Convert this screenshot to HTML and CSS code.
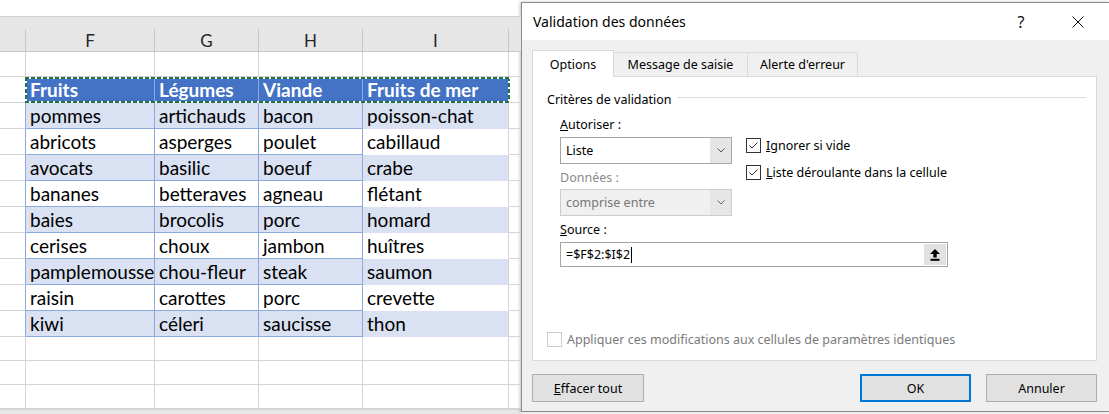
FILE: index.html
```html
<!DOCTYPE html>
<html lang="fr">
<head>
<meta charset="utf-8">
<title>Validation des données</title>
<link rel="stylesheet" href="styles.css">
</head>
<body>
<div class="screen">
  <div class="sheet">
    <div class="toprow"></div>
    <div class="row colhead">
      <div class="c rh"></div><div class="c cf">F</div><div class="c cg">G</div><div class="c ch">H</div><div class="c ci">I</div><div class="c cj"></div>
    </div>
    <div class="row r1">
      <div class="c rh"></div><div class="c cf"></div><div class="c cg"></div><div class="c ch"></div><div class="c ci"></div><div class="c cj"></div>
    </div>
    <div class="row thead">
      <div class="c rh tb"></div><div class="c cf t">Fruits</div><div class="c cg t">Légumes</div><div class="c ch t">Viande</div><div class="c ci t">Fruits de mer</div><div class="c cj"></div>
      <div class="ants"></div>
    </div>
    <div class="row d band"><div class="c rh tb"></div><div class="c cf t">pommes</div><div class="c cg t">artichauds</div><div class="c ch t">bacon</div><div class="c ci t">poisson-chat</div><div class="c cj"></div></div>
    <div class="row d"><div class="c rh tb"></div><div class="c cf t">abricots</div><div class="c cg t">asperges</div><div class="c ch t">poulet</div><div class="c ci t">cabillaud</div><div class="c cj"></div></div>
    <div class="row d band"><div class="c rh tb"></div><div class="c cf t">avocats</div><div class="c cg t">basilic</div><div class="c ch t">boeuf</div><div class="c ci t">crabe</div><div class="c cj"></div></div>
    <div class="row d"><div class="c rh tb"></div><div class="c cf t">bananes</div><div class="c cg t">betteraves</div><div class="c ch t">agneau</div><div class="c ci t">flétant</div><div class="c cj"></div></div>
    <div class="row d band"><div class="c rh tb"></div><div class="c cf t">baies</div><div class="c cg t">brocolis</div><div class="c ch t">porc</div><div class="c ci t">homard</div><div class="c cj"></div></div>
    <div class="row d"><div class="c rh tb"></div><div class="c cf t">cerises</div><div class="c cg t">choux</div><div class="c ch t">jambon</div><div class="c ci t">huîtres</div><div class="c cj"></div></div>
    <div class="row d band"><div class="c rh tb"></div><div class="c cf t">pamplemousse</div><div class="c cg t">chou-fleur</div><div class="c ch t">steak</div><div class="c ci t">saumon</div><div class="c cj"></div></div>
    <div class="row d"><div class="c rh tb"></div><div class="c cf t">raisin</div><div class="c cg t">carottes</div><div class="c ch t">porc</div><div class="c ci t">crevette</div><div class="c cj"></div></div>
    <div class="row d band"><div class="c rh tb"></div><div class="c cf t">kiwi</div><div class="c cg t">céleri</div><div class="c ch t">saucisse</div><div class="c ci t">thon</div><div class="c cj"></div></div>
    <div class="row e"><div class="c rh"></div><div class="c cf"></div><div class="c cg"></div><div class="c ch"></div><div class="c ci"></div><div class="c cj"></div></div>
    <div class="row e"><div class="c rh"></div><div class="c cf"></div><div class="c cg"></div><div class="c ch"></div><div class="c ci"></div><div class="c cj"></div></div>
    <div class="row e"><div class="c rh"></div><div class="c cf"></div><div class="c cg"></div><div class="c ch"></div><div class="c ci"></div><div class="c cj"></div></div>
    <div class="bottom"></div>
  </div>

  <div class="dialog">
    <div class="titlebar">
      <div class="title">Validation des données</div>
      <div class="tbtn help">?</div>
      <div class="tbtn close">
        <svg width="12" height="12" viewBox="0 0 12 12"><path d="M0.5 0.5 L11.5 11.5 M11.5 0.5 L0.5 11.5" stroke="#111" stroke-width="1" fill="none"/></svg>
      </div>
    </div>
    <div class="dbody">
      <div class="tabs">
        <div class="tab sel">Options</div>
        <div class="tab t2">Message de saisie</div>
        <div class="tab t3">Alerte d'erreur</div>
      </div>
      <div class="panel">
        <div class="grp"><span>Critères de validation</span><i></i></div>
        <div class="form">
          <div class="top">
            <div class="left">
              <div class="lbl l1"><u>A</u>utoriser :</div>
              <div class="select s1">
                <div class="val">Liste</div>
                <div class="dd"><svg width="8" height="5" viewBox="0 0 8 5"><polyline points="0.5,0.5 4,4 7.5,0.5" fill="none" stroke="#555" stroke-width="1"/></svg></div>
              </div>
              <div class="lbl l2 dis">Données :</div>
              <div class="select s2 off">
                <div class="val">comprise entre</div>
                <div class="dd"><svg width="8" height="5" viewBox="0 0 8 5"><polyline points="0.5,0.5 4,4 7.5,0.5" fill="none" stroke="#666" stroke-width="1"/></svg></div>
              </div>
            </div>
            <div class="checks">
              <div class="chk">
                <span class="box"><svg width="13" height="13" viewBox="0 0 13 13"><polyline points="2.5,6.5 5,9 10.5,3.5" fill="none" stroke="#333" stroke-width="1"/></svg></span>
                <span><u>I</u>gnorer si vide</span>
              </div>
              <div class="chk">
                <span class="box"><svg width="13" height="13" viewBox="0 0 13 13"><polyline points="2.5,6.5 5,9 10.5,3.5" fill="none" stroke="#333" stroke-width="1"/></svg></span>
                <span><u>L</u>iste déroulante dans la cellule</span>
              </div>
            </div>
          </div>
          <div class="lbl l3"><u>S</u>ource :</div>
          <div class="input">
            <div class="ival">=$F$2:$I$2<span class="caret"></span></div>
            <div class="up"><svg width="10" height="12" viewBox="0 0 10 12"><polygon points="5,0 10,5 6.7,5 6.7,8.5 3.3,8.5 3.3,5 0,5" fill="#000"/><rect x="0.5" y="9.8" width="9" height="2" fill="#000"/></svg></div>
          </div>
        </div>
        <div class="apply">
          <span class="box offbox"></span>
          <span>Appliquer ces modifications aux cellules de paramètres identiques</span>
        </div>
      </div>
      <div class="btns">
        <div class="btn clear"><span><u>E</u>ffacer tout</span></div>
        <div class="btn ok">OK</div>
        <div class="btn cancel">Annuler</div>
      </div>
    </div>
  </div>
</div>
</body>
</html>
```
FILE: styles.css
```css
* { box-sizing: border-box; margin: 0; padding: 0; }
html, body { width: 1109px; height: 414px; overflow: hidden; background: #fff; }
body { font-family: "Noto Sans", "Open Sans", sans-serif; }

.screen { display: flex; align-items: flex-start; width: 1109px; height: 414px; }

/* ---------- spreadsheet ---------- */
.sheet { width: 521px; flex: none; height: 414px; background: #fff; font-family: Lato, "Liberation Sans", sans-serif; }
.toprow { height: 16px; }
.row { display: flex; height: 26px; position: relative; }
.c {
  flex: none; height: 100%;
  border-right: 1px solid #d4d4d4; border-bottom: 1px solid #d4d4d4;
  white-space: nowrap; font-size: 19px; color: #000;
  padding-left: 4px; display: flex; align-items: center;
}
.rh { width: 26px; }
.cf { width: 129px; }
.cg { width: 104px; }
.ch { width: 104px; }
.ci { width: 146px; }
.cj { width: 12px; border-right: none; }

.colhead { height: 36px; background: #e6e6e6; border-top: 1px solid #d0d0d0; border-bottom: 1px solid #c8c8c8; align-items: flex-end; }
.colhead .c { height: 22px; border-bottom: none; border-right-color: #c6c6c6; justify-content: center; padding: 0; font-size: 17px; color: #262626; }
.colhead .cj { border-right: none; }

.r1 { height: 25px; }
.e { height: 24px; }

.tb { border-right-color: #8ea9db; }
.thead .t { background: #4472c4; color: #fff; font-weight: 700; border-right-color: #8ea9db; border-bottom-color: #8ea9db; }
.thead .ci { border-right-color: #d4d4d4; }
.ants {
  position: absolute; left: 25px; top: 0; width: 485px; height: 26px; pointer-events: none;
  background:
    repeating-linear-gradient(90deg, #217346 0 4px, #fff 4px 6px) left top / 100% 2px no-repeat,
    repeating-linear-gradient(90deg, #217346 0 4px, #fff 4px 6px) left bottom / 100% 2px no-repeat,
    repeating-linear-gradient(180deg, #217346 0 4px, #fff 4px 6px) left top / 2px 100% no-repeat,
    repeating-linear-gradient(180deg, #217346 0 4px, #fff 4px 6px) right top / 2px 100% no-repeat;
}
.d .cf, .d .cg, .d .ch { border-right-color: #8ea9db; border-bottom-color: #8ea9db; }
.d .ci { border-bottom-color: transparent; }
.band .t { background: #d9e1f2; }
.bottom { height: 5px; background: #e6e6e6; border-top: 1px solid #d4d4d4; }

/* ---------- dialog ---------- */
.dialog {
  flex: 1; margin-top: 2px; height: 410px;
  border: 1px solid #8c8c8c; border-right: none;
  background: #f0f0f0; box-shadow: -1px 0 3px rgba(0,0,0,0.25);
  display: flex; flex-direction: column;
  font-size: 12.5px; color: #000;
}
.titlebar { flex: none; height: 37px; background: #fff; display: flex; align-items: center; padding-left: 11px; }
.title { flex: 1; font-size: 14px; }
.tbtn { width: 46px; height: 37px; display: flex; align-items: center; justify-content: center; }
.help { font-size: 16px; margin-right: 11px; color: #111; }
.close { margin-right: 8px; }

.dbody { flex: 1; padding: 10px 12px 0 10px; display: flex; flex-direction: column; }
.tabs { display: flex; align-items: flex-end; height: 27px; position: relative; z-index: 1; }
.tab {
  height: 24px; margin-bottom: 1px; margin-left: -1px;
  border: 1px solid #d9d9d9; border-bottom: none; background: #f0f0f0;
  display: flex; align-items: center; justify-content: center;
}
.tab.sel { height: 27px; margin: 0; width: 82px; background: #fff; position: relative; z-index: 2; }
.t2 { width: 135px; }
.t3 { width: 111px; }

.panel {
  margin-top: -1px; height: 285px; flex: none;
  background: #fff; border: 1px solid #d9d9d9;
  display: flex; flex-direction: column; padding: 0 10px 0 14px;
}
.grp { margin-top: 13px; height: 18px; display: flex; align-items: center; }
.grp i { flex: 1; height: 1px; background: #dcdcdc; margin-left: 5px; margin-top: -4px; }

.form { padding-left: 13px; }
.top { display: flex; }
.left { width: 172px; flex: none; }
.lbl { height: 18px; line-height: 18px; }
.l1 { margin-top: 8px; }
.l2 { margin-top: 5px; }
.l3 { margin-top: 5px; }
.dis { color: #8a8a8a; }

.select { height: 27px; border: 1px solid #a6a6a6; background: #fff; display: flex; }
.s1 { margin-top: 3px; }
.s2 { margin-top: 2px; }
.select .val { flex: 1; padding-left: 5px; display: flex; align-items: center; }
.select .dd { width: 21px; background: #e5e5e5; display: flex; align-items: center; justify-content: center; }
.select.off { background: #f0f0f0; border-color: #cccccc; color: #777; }
.select.off .dd { background: #e6e6e6; }

.checks { margin-left: 14px; padding-top: 30px; }
.chk { display: flex; align-items: center; height: 15px; margin-bottom: 12px; }
.box { width: 15px; height: 15px; border: 1px solid #333; background: #fff; display: flex; align-items: center; justify-content: center; margin-right: 5px; flex: none; }

.input { margin-top: 3px; width: 388px; height: 25px; border: 1px solid #a6a6a6; background: #fff; display: flex; }
.ival { flex: 1; padding-left: 5px; display: flex; align-items: center; }
.caret { display: inline-block; width: 1px; height: 16px; background: #000; margin-left: 1px; }
.up { width: 24px; background: #e1e1e1; border: 1px solid #fff; display: flex; align-items: center; justify-content: center; }

.apply { margin-top: auto; margin-bottom: 13px; display: flex; align-items: center; height: 15px; color: #7a7a7a; }
.offbox { border-color: #cccccc; }

.btns { display: flex; margin-top: 13px; }
.btn { height: 28px; border: 1px solid #adadad; background: #e1e1e1; display: flex; align-items: center; justify-content: center; }
.clear { width: 112px; }
.ok { margin-left: auto; width: 111px; border: 2px solid #0078d7; }
.cancel { margin-left: 15px; width: 111px; }
```
